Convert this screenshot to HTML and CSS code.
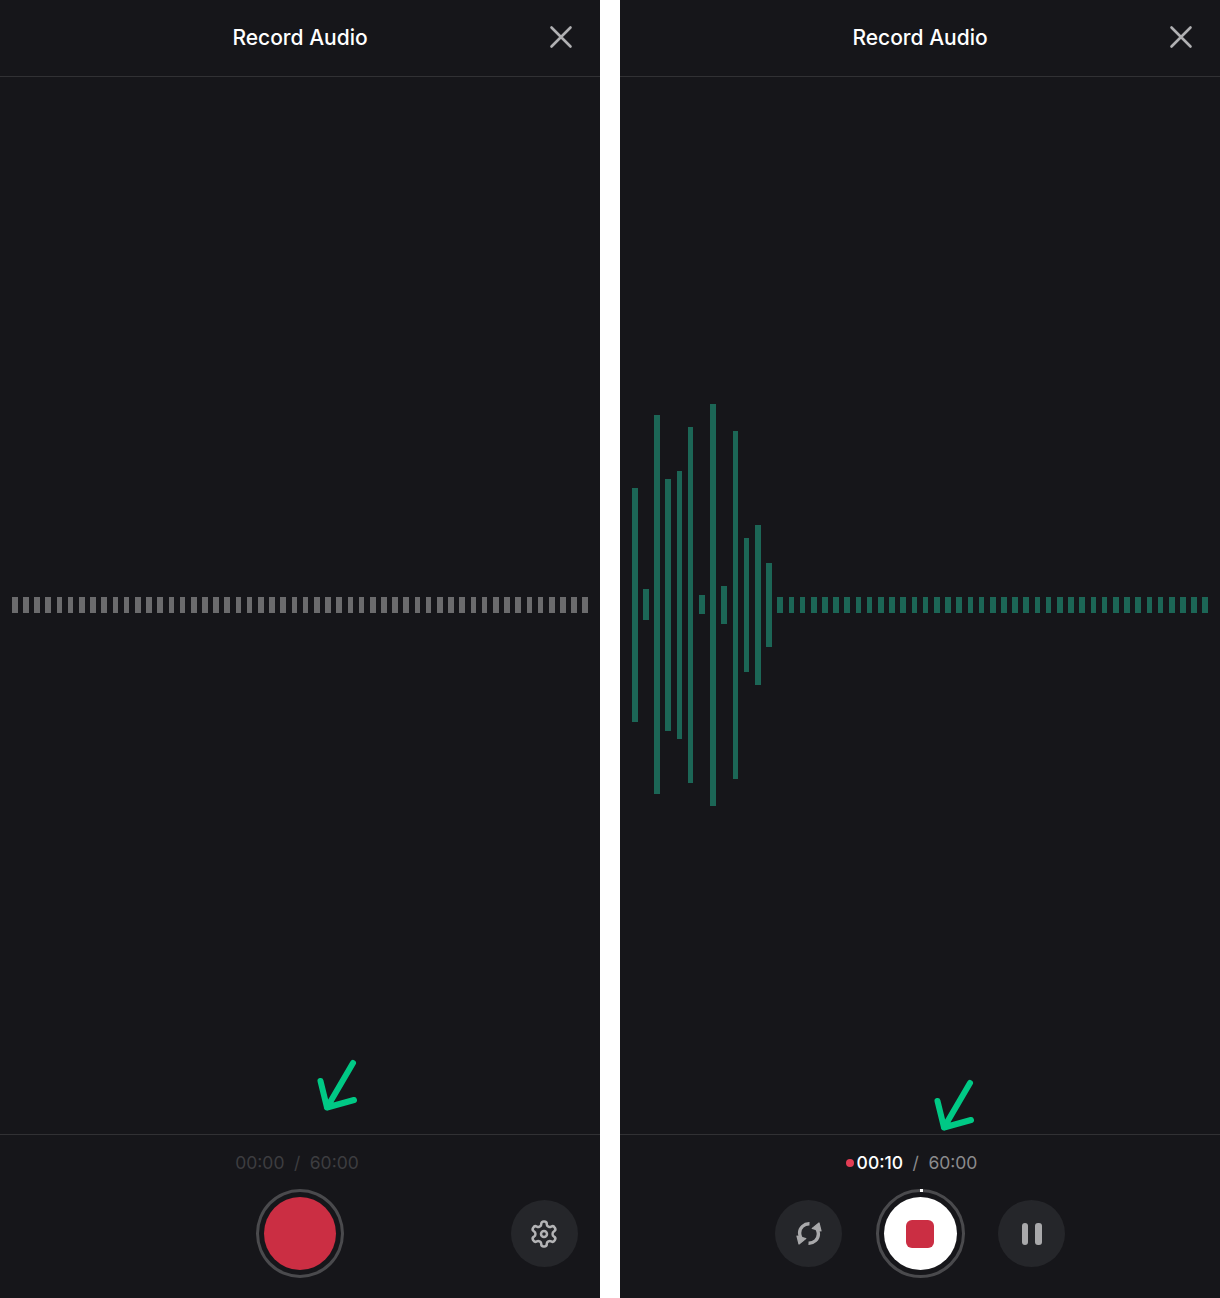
FILE: index.html
```html
<!DOCTYPE html>
<html>
<head>
  <meta charset="UTF-8">
  <title>Record Audio</title>
  <link rel="stylesheet" href="styles.css">
</head>
<body>
  <div class="screens">

    <!-- Idle -->
    <section class="panel">
      <header class="topbar">
        <h1 class="title">Record Audio</h1>
        <button class="close">
          <svg width="24" height="24" viewBox="0 0 24 24"><path d="M2.5 2.5l19 19M21.5 2.5l-19 19"/></svg>
        </button>
      </header>

      <div class="wave wave-idle">
        <i></i><i></i><i></i><i></i><i></i><i></i><i></i><i></i><i></i><i></i><i></i><i></i><i></i>
        <i></i><i></i><i></i><i></i><i></i><i></i><i></i><i></i><i></i><i></i><i></i><i></i><i></i>
        <i></i><i></i><i></i><i></i><i></i><i></i><i></i><i></i><i></i><i></i><i></i><i></i><i></i>
        <i></i><i></i><i></i><i></i><i></i><i></i><i></i><i></i><i></i><i></i><i></i><i></i><i></i>
      </div>

      <footer class="bottom">
        <div class="time time-idle">
          <span>00:00</span><span class="slash">/</span><span>60:00</span>
        </div>
        <div class="controls controls-idle">
          <button class="record"><span class="record-dot"></span></button>
          <button class="round round-end">
            <svg width="30" height="30" viewBox="0 0 24 24" class="line-icon">
              <path d="M12.22 2h-.44a2 2 0 0 0-2 2v.18a2 2 0 0 1-1 1.73l-.43.25a2 2 0 0 1-2 0l-.15-.08a2 2 0 0 0-2.73.73l-.22.38a2 2 0 0 0 .73 2.73l.15.1a2 2 0 0 1 1 1.72v.51a2 2 0 0 1-1 1.74l-.15.09a2 2 0 0 0-.73 2.73l.22.38a2 2 0 0 0 2.73.73l.15-.08a2 2 0 0 1 2 0l.43.25a2 2 0 0 1 1 1.73V20a2 2 0 0 0 2 2h.44a2 2 0 0 0 2-2v-.18a2 2 0 0 1 1-1.73l.43-.25a2 2 0 0 1 2 0l.15.08a2 2 0 0 0 2.73-.73l.22-.39a2 2 0 0 0-.73-2.73l-.15-.08a2 2 0 0 1-1-1.74v-.5a2 2 0 0 1 1-1.74l.15-.09a2 2 0 0 0 .73-2.73l-.22-.38a2 2 0 0 0-2.73-.73l-.15.08a2 2 0 0 1-2 0l-.43-.25a2 2 0 0 1-1-1.73V4a2 2 0 0 0-2-2z"/>
              <circle cx="12" cy="12" r="2.4"/>
            </svg>
          </button>
        </div>
      </footer>

      <svg class="arrow arrow-idle" width="46" height="56" viewBox="0 0 46 56">
        <path d="M37 5L11 49.5M4.5 23L11 49.5L38 42"/>
      </svg>
    </section>

    <!-- Recording -->
    <section class="panel">
      <header class="topbar">
        <h1 class="title">Record Audio</h1>
        <button class="close">
          <svg width="24" height="24" viewBox="0 0 24 24"><path d="M2.5 2.5l19 19M21.5 2.5l-19 19"/></svg>
        </button>
      </header>

      <div class="wave wave-live">
        <i style="height:234px"></i><i style="height:31px"></i><i style="height:379px"></i><i style="height:252px"></i><i style="height:268px"></i><i style="height:356px"></i><i style="height:19px"></i><i style="height:402px"></i><i style="height:38px"></i><i style="height:348px"></i><i style="height:134px"></i><i style="height:160px"></i><i style="height:84px"></i>
        <i></i><i></i><i></i><i></i><i></i><i></i><i></i><i></i><i></i><i></i><i></i><i></i><i></i>
        <i></i><i></i><i></i><i></i><i></i><i></i><i></i><i></i><i></i><i></i><i></i><i></i><i></i>
        <i></i><i></i><i></i><i></i><i></i><i></i><i></i><i></i><i></i><i></i><i></i><i></i><i></i>
      </div>

      <footer class="bottom">
        <div class="time time-live">
          <span class="rec-dot"></span><span class="elapsed">00:10</span><span class="slash">/</span><span>60:00</span>
        </div>
        <div class="controls controls-live">
          <button class="round">
            <svg width="26" height="25" viewBox="0 0 26 25" class="sync-icon">
              <path class="sync-arc" d="M13.5 2.8C8 2.6 3.6 6.8 3.6 12c0 1.8.5 3.4 1.3 4.8"/>
              <path class="sync-head" d="M1 15l8.8 2.6L3 23z"/>
              <g transform="rotate(180 13 12.5)">
                <path class="sync-arc" d="M13.5 2.8C8 2.6 3.6 6.8 3.6 12c0 1.8.5 3.4 1.3 4.8"/>
                <path class="sync-head" d="M1 15l8.8 2.6L3 23z"/>
              </g>
            </svg>
          </button>
          <button class="record">
            <span class="tick"></span>
            <span class="stop-disc"><span class="stop-square"></span></span>
          </button>
          <button class="round">
            <span class="pause"><span></span><span></span></span>
          </button>
        </div>
      </footer>

      <svg class="arrow arrow-live" width="46" height="56" viewBox="0 0 46 56">
        <path d="M37 5L11 49.5M4.5 23L11 49.5L38 42"/>
      </svg>
    </section>

  </div>
</body>
</html>
```

FILE: styles.css
```css
* {
  box-sizing: border-box;
}

body {
  margin: 0;
  background-color: #fff;
  font-family: Inter, "Liberation Sans", sans-serif;
}

button {
  padding: 0;
  border: 0;
  background: none;
}

.screens {
  display: flex;
  gap: 20px;
}

.panel {
  position: relative;
  display: flex;
  flex-direction: column;
  width: 600px;
  height: 1298px;
  background-color: #16161a;
}

/* top bar */
.topbar {
  display: flex;
  align-items: center;
  justify-content: center;
  position: relative;
  height: 77px;
  border-bottom: 1px solid #313134;
}

.title {
  margin: 0;
  color: #fff;
  font-size: 21px;
  font-weight: 500;
  line-height: 28px;
}

.close {
  position: absolute;
  top: 25px;
  right: 27px;
  height: 24px;
}

.close path {
  fill: none;
  stroke: #b0b0b2;
  stroke-width: 2.6;
  stroke-linecap: round;
}

/* waveform */
.wave {
  flex: 1;
  display: flex;
  align-items: center;
  justify-content: center;
  gap: 5.6px;
  padding-bottom: 2px;
}

.wave i {
  display: block;
  width: 5.6px;
  height: 16px;
}

.wave-idle i {
  background-color: #6b6b6d;
}

.wave-live i {
  background-color: #1c6656;
}

/* bottom bar */
.bottom {
  height: 164px;
  padding-top: 17px;
  border-top: 1px solid #313134;
}

.time {
  display: flex;
  align-items: center;
  justify-content: center;
  height: 21px;
  margin-bottom: 16px;
  color: #8b8b8d;
  font-size: 17.5px;
  line-height: 21px;
}

.time-idle {
  padding-right: 6px;
  color: #3d3d40;
}

.time-live {
  padding-right: 17px;
}

.slash {
  margin: 0 9.5px;
}

.elapsed {
  color: #fff;
  font-weight: 500;
}

.rec-dot {
  width: 8px;
  height: 8px;
  margin-right: 3px;
  border-radius: 50%;
  background-color: #e23d55;
}

.controls {
  height: 89px;
}

.controls-idle {
  display: grid;
  grid-template-columns: 1fr 88px 1fr;
  align-items: center;
  padding: 0 22px;
}

.controls-idle .record {
  grid-column: 2;
  width: 88px;
}

.controls-live {
  display: flex;
  align-items: center;
  justify-content: center;
  gap: 33.5px;
}

.record {
  position: relative;
  display: flex;
  align-items: center;
  justify-content: center;
  width: 89px;
  height: 89px;
  border: 3px solid #4a4a4d;
  border-radius: 50%;
}

.record-dot {
  width: 72px;
  height: 73px;
  border-radius: 50%;
  background-color: #cb2e43;
}

.stop-disc {
  display: flex;
  align-items: center;
  justify-content: center;
  width: 73px;
  height: 73px;
  border-radius: 50%;
  background-color: #fff;
}

.stop-square {
  width: 28px;
  height: 28px;
  border-radius: 6px;
  background-color: #cb2e43;
}

.tick {
  position: absolute;
  top: -3px;
  left: 41.5px;
  width: 3px;
  height: 3px;
  background-color: #fff;
}

.round {
  display: flex;
  align-items: center;
  justify-content: center;
  width: 67px;
  height: 67px;
  border-radius: 50%;
  background-color: #25262a;
}

.round-end {
  justify-self: end;
}

.line-icon {
  margin-right: 1px;
  fill: none;
  stroke: #b4b4b6;
  stroke-width: 2;
  stroke-linecap: round;
  stroke-linejoin: round;
}

.sync-arc {
  fill: none;
  stroke: #a9a9ab;
  stroke-width: 3.4;
}

.sync-head {
  fill: #a9a9ab;
  stroke: #a9a9ab;
  stroke-width: 1.2;
  stroke-linejoin: round;
}

.pause {
  display: flex;
  gap: 7px;
}

.pause span {
  width: 6.5px;
  height: 22px;
  border-radius: 3px;
  background-color: #a9a9ab;
}

/* hand drawn arrows on top of the screens */
.arrow {
  position: absolute;
}

.arrow path {
  fill: none;
  stroke: #00c985;
  stroke-width: 6;
  stroke-linecap: round;
  stroke-linejoin: round;
}

.arrow-idle {
  left: 316px;
  top: 1058px;
}

.arrow-live {
  left: 313px;
  top: 1078px;
}
```
